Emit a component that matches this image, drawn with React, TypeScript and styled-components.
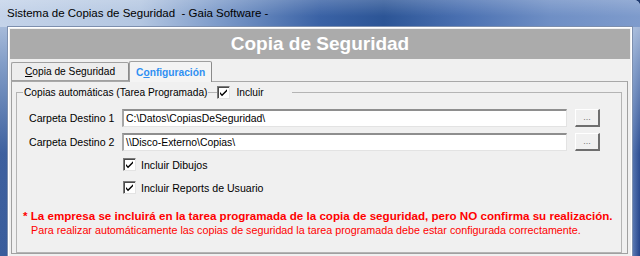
import React from 'react'
import styled, { createGlobalStyle } from 'styled-components'

const GlobalStyle = createGlobalStyle`
    html, body {
        margin: 0;
        padding: 0;
        background: #1e3a70;
    }
    * {
        box-sizing: border-box;
    }
`

const Window = styled.div`
    width: 640px;
    height: 256px;
    display: flex;
    flex-direction: column;
    overflow: hidden;
    border-top-right-radius: 6px;
    background:
        linear-gradient(180deg, rgba(200, 214, 235, 0.95) 0%, rgba(160, 184, 218, 0.7) 25%, rgba(70, 105, 165, 0.3) 60%, rgba(30, 55, 110, 0) 100%),
        linear-gradient(90deg, #3a5d9c 0%, #2a4d8f 50%, #274a8c 97%, #6d8cc2 98.5%, #24438a 100%);
    font-family: "Liberation Sans", Arial, sans-serif;
`

const TitleBar = styled.div`
    height: 27px;
    flex: none;
    display: flex;
    align-items: center;
    padding: 0 0 2px 7px;
    font-size: 11.5px;
    color: #000;
    background:
        linear-gradient(180deg, rgba(255, 255, 255, 0.18) 0%, rgba(255, 255, 255, 0) 60%),
        linear-gradient(90deg, #c4d3e9 0%, #b3c6e1 22%, #7d9bca 34%, #3a62a5 50%, #2c5596 60%, #4a70b1 72%, #6f8fc5 86%, #7e9bcc 100%);
    white-space: pre;
`

const Client = styled.div`
    flex: 1;
    margin: 0 8px 0 8px;
    border: 1px solid #ffffff;
    border-bottom: none;
    outline: 1px solid #7d8fae;
    background: #f0f0f0;
    display: flex;
    flex-direction: column;
    padding: 1px 1px 0 1px;
`

const Banner = styled.div`
    height: 30px;
    flex: none;
    background: #ababab;
    color: #ffffff;
    font-weight: bold;
    font-size: 19px;
    display: flex;
    align-items: center;
    justify-content: center;
    margin: 0 0 1px 0;
`

const TabStrip = styled.div`
    display: flex;
    align-items: flex-end;
    height: 21px;
    padding-left: 1px;
    flex: none;
    position: relative;
    z-index: 1;
`

const Tab = styled.div<{ $active?: boolean }>`
    height: ${p => (p.$active ? '21px' : '19px')};
    padding: 0 ${p => (p.$active ? '6px' : '13px')};
    margin-bottom: ${p => (p.$active ? '-1px' : '0')};
    display: flex;
    align-items: center;
    font-size: 10.2px;
    font-weight: ${p => (p.$active ? 'bold' : 'normal')};
    color: ${p => (p.$active ? '#2f8ff2' : '#000')};
    background: ${p => (p.$active ? '#f4f4f4' : '#ededed')};
    border: 1px solid #a0a0a0;
    border-bottom: ${p => (p.$active ? 'none' : '1px solid #a0a0a0')};
    border-right-color: #8a8a8a;
    border-radius: 2px 2px 0 0;
    u {
        text-decoration: underline;
        text-underline-offset: 1px;
    }
`

const Panel = styled.div`
    flex: 1;
    margin: 0 2px 2px 1px;
    border: 1px solid #a0a0a0;
    border-top-color: #a8a8a8;
    background: #f0f0f0;
    padding: 4px 5px 0 4px;
    display: flex;
`

const Group = styled.fieldset`
    flex: 1;
    margin: 0;
    padding: 6px 4px 0 12px;
    border: 1px solid #b4b4b4;
    font-size: 10.6px;
    display: flex;
    flex-direction: column;
`

const Legend = styled.legend`
    padding: 0 28px 0 1px;
    margin-left: -6px;
    display: flex;
    align-items: center;
    font-size: 10.2px;
    background: #f0f0f0;
`

const LegendLine = styled.span`
    width: 9px;
    height: 1px;
    margin: 0 0 0 1px;
    background: #b4b4b4;
`

const Check = styled.span`
    width: 13px;
    height: 13px;
    flex: none;
    background: #fff;
    border: 1px solid;
    border-color: #7a7a7a #e3e3e3 #e3e3e3 #7a7a7a;
    box-shadow: inset 1px 1px 0 #4a4a4a;
    display: inline-flex;
    align-items: center;
    justify-content: center;
`

const CheckOption = styled.label<{ $gap?: number }>`
    display: flex;
    align-items: center;
    gap: ${p => p.$gap ?? 5}px;
    height: 13px;
`

const Row = styled.div`
    display: flex;
    align-items: center;
    height: 18px;
    margin-bottom: 6px;
`

const FieldLabel = styled.span`
    width: 93px;
    flex: none;
`

const TextBox = styled.div`
    width: 445px;
    height: 18px;
    flex: none;
    background: #fff;
    border-top: 2px solid #8e8e8e;
    border-left: 2px solid #a6a6a6;
    border-right: 1px solid #e3e3e3;
    border-bottom: 1px solid #e3e3e3;
    padding: 0 2px;
    display: flex;
    align-items: center;
    font-size: 10.4px;
`

const BrowseButton = styled.div`
    width: 25px;
    height: 18px;
    margin-left: 8px;
    flex: none;
    background: #f0f0f0;
    border-top: 1px solid #ffffff;
    border-left: 1px solid #ffffff;
    border-right: 2px solid #6e6e6e;
    border-bottom: 2px solid #6e6e6e;
    display: flex;
    align-items: center;
    justify-content: center;
    font-size: 9px;
    color: #777;
    padding-bottom: 2px;
`

const Options = styled.div`
    display: flex;
    flex-direction: column;
    gap: 10px;
    padding-left: 94px;
    margin-top: 1px;
`

const Notices = styled.div`
    display: flex;
    flex-direction: column;
    margin-top: 14px;
`

const Notice = styled.div<{ $strong?: boolean }>`
    color: #ff0000;
    font-size: ${p => (p.$strong ? '11.6px' : '10.75px')};
    font-weight: ${p => (p.$strong ? 'bold' : 'normal')};
    margin-left: ${p => (p.$strong ? '-6px' : '2px')};
    height: 15px;
    line-height: 15px;
    white-space: nowrap;
`

const Tick = () => (
    <svg width="9" height="9" viewBox="0 0 9 9">
        <path d="M1 4 L3 6.2 L8 1.2 L8 3.2 L3 8.2 L1 6 Z" fill="#000" />
    </svg>
)

const folders = [
    { label: 'Carpeta Destino 1', value: 'C:\\Datos\\CopiasDeSeguridad\\' },
    { label: 'Carpeta Destino 2', value: '\\\\Disco-Externo\\Copias\\' },
]

export default function App() {
    return (
        <>
            <GlobalStyle />
            <Window>
                <TitleBar>Sistema de Copias de Seguridad  - Gaia Software -</TitleBar>
                <Client>
                    <Banner>Copia de Seguridad</Banner>
                    <TabStrip>
                        <Tab><span><u>C</u>opia de Seguridad</span></Tab>
                        <Tab $active><span>C<u>o</u>nfiguración</span></Tab>
                    </TabStrip>
                    <Panel>
                        <Group>
                            <Legend>
                                <span>Copias automáticas (Tarea Programada)</span>
                                <LegendLine />
                                <CheckOption $gap={6}><Check><Tick /></Check>Incluir</CheckOption>
                            </Legend>
                            <div style={{ height: 4 }} />
                            {folders.map(f => (
                                <Row key={f.label}>
                                    <FieldLabel>{f.label}</FieldLabel>
                                    <TextBox>{f.value}</TextBox>
                                    <BrowseButton>...</BrowseButton>
                                </Row>
                            ))}
                            <Options>
                                <CheckOption><Check><Tick /></Check>Incluir Dibujos</CheckOption>
                                <CheckOption><Check><Tick /></Check>Incluir Reports de Usuario</CheckOption>
                            </Options>
                            <Notices>
                                <Notice $strong>* La empresa se incluirá en la tarea programada de la copia de seguridad, pero NO confirma su realización.</Notice>
                                <Notice>Para realizar automáticamente las copias de seguridad la tarea programada debe estar configurada correctamente.</Notice>
                            </Notices>
                        </Group>
                    </Panel>
                </Client>
            </Window>
        </>
    )
}
